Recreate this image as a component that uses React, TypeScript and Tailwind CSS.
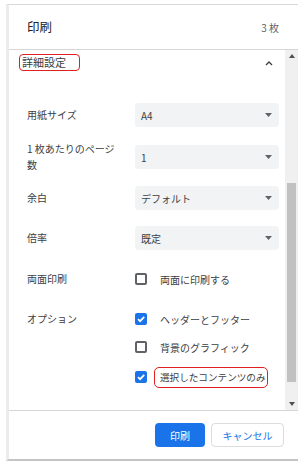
import React from 'react';

const font = { fontFamily: '"Noto Sans CJK JP", "Noto Sans", sans-serif' };

const Caret: React.FC = () => (
  <svg width="7" height="4" viewBox="0 0 7 4" className="shrink-0">
    <path d="M0 0 L7 0 L3.5 4 Z" fill="#5f6368" />
  </svg>
);

const Select: React.FC<{ value: string }> = ({ value }) => (
  <div className="flex-1 h-[24px] bg-[#f1f3f4] rounded-[4px] flex items-center justify-between pl-[6px] pr-[7px] text-[10px] text-[#3c4043]">
    <span>{value}</span>
    <Caret />
  </div>
);

const Checkbox: React.FC<{ checked?: boolean }> = ({ checked }) =>
  checked ? (
    <div className="w-[12px] h-[12px] rounded-[2px] bg-[#1a73e8] flex items-center justify-center shrink-0">
      <svg width="10" height="10" viewBox="0 0 10 10">
        <path d="M2 5.2 L4.1 7.2 L8.2 2.8" stroke="#fff" strokeWidth="1.7" fill="none" />
      </svg>
    </div>
  ) : (
    <div className="w-[12px] h-[12px] rounded-[2px] border-2 border-[#5f6368] shrink-0" />
  );

const Label: React.FC<{ children?: React.ReactNode }> = ({ children }) => (
  <div className="w-[126px] shrink-0 pl-[18px] text-[10px] leading-[16px] text-[#3c4043]">{children}</div>
);

const App: React.FC = () => {
  return (
    <div className="w-[305px] h-[464px] bg-white pt-[4px] pl-[6px] overflow-hidden" style={font}>
      <div className="w-[292px] flex flex-col border-t border-t-[#d8d8d8] border-l-[3px] border-l-[#ececec] border-b-2 border-b-[#c4c4c4]">
        {/* header */}
        <div className="h-[45px] border-b border-[#d6d6d6] flex items-center justify-between pl-[18px] pr-[19px]">
          <span className="text-[12.5px] text-[#202124]">印刷</span>
          <span className="text-[10px] text-[#5f6368]">3 枚</span>
        </div>

        {/* scroll area */}
        <div className="h-[361px] border-b border-[#d6d6d6] flex">
          <div className="flex-1 flex flex-col pr-[6px]">
            <div className="flex items-center justify-between pt-[4px]">
              <div className="ml-[10px] w-[61px] h-[17px] border border-[#e02020] rounded-[4px] flex items-center pl-[2px] text-[11px] text-[#3c4043]">
                詳細設定
              </div>
              <svg width="8" height="6" viewBox="0 0 8 6" className="mr-[6px]">
                <path d="M1 5 L4 2 L7 5" stroke="#3c4043" strokeWidth="1.4" fill="none" />
              </svg>
            </div>

            <div className="flex items-center h-[24px] mt-[32px]">
              <Label>用紙サイズ</Label>
              <Select value="A4" />
            </div>
            <div className="flex items-center h-[24px] mt-[18px]">
              <Label>
                1 枚あたりのページ
                <br />数
              </Label>
              <Select value="1" />
            </div>
            <div className="flex items-center h-[24px] mt-[17px]">
              <Label>余白</Label>
              <Select value="デフォルト" />
            </div>
            <div className="flex items-center h-[24px] mt-[16px]">
              <Label>倍率</Label>
              <Select value="既定" />
            </div>
            <div className="flex items-center h-[24px] mt-[17px]">
              <Label>両面印刷</Label>
              <Checkbox />
              <span className="ml-[13px] text-[10px] text-[#3c4043]">両面に印刷する</span>
            </div>
            <div className="flex items-center h-[24px] mt-[16px]">
              <Label>オプション</Label>
              <Checkbox checked />
              <span className="ml-[13px] text-[10px] text-[#3c4043]">ヘッダーとフッター</span>
            </div>
            <div className="flex items-center h-[24px] mt-[4px]">
              <Label />
              <Checkbox />
              <span className="ml-[13px] text-[10px] text-[#3c4043]">背景のグラフィック</span>
            </div>
            <div className="flex items-center h-[24px] mt-[6px]">
              <Label />
              <Checkbox checked />
              <span className="ml-[7px] h-[21px] w-[114px] shrink-0 border border-[#e02020] rounded-[5px] flex items-center pl-[5px] text-[9.6px] text-[#3c4043] whitespace-nowrap">
                選択したコンテンツのみ
              </span>
            </div>
          </div>

          {/* scrollbar */}
          <div className="w-[13px] bg-[#f0f0f0] flex flex-col items-center">
            <div className="h-[12px] flex items-center justify-center">
              <svg width="6" height="4" viewBox="0 0 6 4">
                <path d="M0 4 L6 4 L3 0 Z" fill="#505050" />
              </svg>
            </div>
            <div className="flex-1 w-full flex flex-col items-center">
              <div className="mt-[121px] w-[9px] h-[199px] bg-[#c1c1c1]" />
            </div>
            <div className="h-[12px] flex items-center justify-center">
              <svg width="6" height="4" viewBox="0 0 6 4">
                <path d="M0 0 L6 0 L3 4 Z" fill="#505050" />
              </svg>
            </div>
          </div>
        </div>

        {/* footer */}
        <div className="h-[48px] flex items-start justify-end gap-[6px] pt-[12px] pr-[14px]">
          <button className="w-[50px] h-[24px] rounded-[4px] bg-[#1a73e8] text-white text-[10px]">印刷</button>
          <button className="w-[73px] h-[24px] rounded-[4px] border border-[#dadce0] bg-white text-[#1a73e8] text-[10px]">
            キャンセル
          </button>
        </div>
      </div>
    </div>
  );
};

export default App;
